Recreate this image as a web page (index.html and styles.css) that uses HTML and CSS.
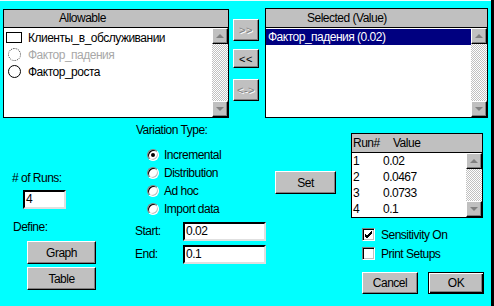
FILE: index.html
```html
<!DOCTYPE html>
<html>
  <head>
    <link rel="stylesheet" href="styles.css">
  </head>
  <body>
    <div class="dialog">
      <div class="top">
        <div class="listbox allowable">
          <div class="lb-head">Allowable</div>
          <div class="lb-body">
            <div class="lb-items">
              <div class="item"><span class="ico rect"></span>Клиенты_в_обслуживании</div>
              <div class="item disabled"><span class="ico dotted"></span>Фактор_падения</div>
              <div class="item"><span class="ico circle"></span>Фактор_роста</div>
            </div>
            <div class="scrollbar">
              <div class="sb-btn up"></div>
              <div class="sb-track"></div>
              <div class="sb-btn down"></div>
            </div>
          </div>
        </div>
        <div class="arrows">
          <button class="btn arrow off">&gt;&gt;</button>
          <button class="btn arrow">&lt;&lt;</button>
          <button class="btn arrow off">&lt;-&gt;</button>
        </div>
        <div class="listbox selected">
          <div class="lb-head">Selected (Value)</div>
          <div class="lb-body">
            <div class="lb-items">
              <div class="item sel">Фактор_падения (0.02)</div>
            </div>
            <div class="scrollbar">
              <div class="sb-btn up"></div>
              <div class="sb-track"></div>
              <div class="sb-btn down"></div>
            </div>
          </div>
        </div>
      </div>

      <div class="bottom">
        <div class="col runs">
          <div class="label runs-label"># of Runs:</div>
          <div class="field runs-field">4</div>
          <div class="label define-label">Define:</div>
          <button class="btn wide graph">Graph</button>
          <button class="btn wide table-btn">Table</button>
        </div>

        <div class="col variation">
          <div class="label vt-label">Variation Type:</div>
          <div class="radios">
            <div class="radio-row"><span class="radio on"></span>Incremental</div>
            <div class="radio-row"><span class="radio"></span>Distribution</div>
            <div class="radio-row"><span class="radio"></span>Ad hoc</div>
            <div class="radio-row"><span class="radio"></span>Import data</div>
          </div>
          <div class="range-row start">
            <span class="label">Start:</span>
            <div class="field range-field">0.02</div>
          </div>
          <div class="range-row end">
            <span class="label">End:</span>
            <div class="field range-field">0.1</div>
          </div>
        </div>

        <div class="col setcol">
          <button class="btn set">Set</button>
        </div>

        <div class="col results">
          <div class="listbox runtable">
            <div class="lb-head"><span class="c1">Run#</span><span>Value</span></div>
            <div class="lb-body">
              <div class="lb-items">
                <div class="row"><span class="c1">1</span>0.02</div>
                <div class="row"><span class="c1">2</span>0.0467</div>
                <div class="row"><span class="c1">3</span>0.0733</div>
                <div class="row"><span class="c1">4</span>0.1</div>
              </div>
              <div class="scrollbar">
                <div class="sb-btn up"></div>
                <div class="sb-track"></div>
                <div class="sb-btn down"></div>
              </div>
            </div>
          </div>
          <div class="check-row first">
            <span class="check">
              <svg width="9" height="9" viewBox="0 0 9 9"><path d="M1 4 L3 6 L8 1 M1 5 L3 7 L8 2 M1 6 L3 8 L8 3" stroke="#000" stroke-width="1" fill="none"/></svg>
            </span>Sensitivity On
          </div>
          <div class="check-row"><span class="check"></span>Print Setups</div>
          <div class="actions">
            <button class="btn act">Cancel</button>
            <button class="btn act default">OK</button>
          </div>
        </div>
      </div>
    </div>
  </body>
</html>
```

FILE: styles.css
```css
body {
  margin: 0;
  background: #000;
  font-family: "Liberation Sans", Arial, sans-serif;
  font-size: 12px;
  letter-spacing: -0.5px;
  color: #000;
}
.dialog {
  box-sizing: border-box;
  width: 491px;
  height: 306px;
  background: #00ffff;
  border-top: 1px solid #e8ffff;
  overflow: hidden;
}

/* top row: two list boxes and the move buttons */
.top {
  display: flex;
  align-items: flex-start;
  padding: 7px 0 0 3px;
  height: 110px;
}
.listbox {
  box-sizing: border-box;
  border: 1px solid #000;
  background: #fff;
  display: flex;
  flex-direction: column;
}
.lb-head {
  background: #c0c0c0;
  border-bottom: 1px solid #000;
  height: 17px;
  line-height: 17px;
  white-space: nowrap;
}
.lb-body {
  flex: 1;
  display: flex;
  min-height: 0;
}
.lb-items {
  flex: 1;
  padding-top: 1px;
}
.allowable {
  margin-top: 1px;
  width: 226px;
  height: 109px;
}
.allowable .lb-head {
  padding-left: 55px;
}
.selected {
  margin-left: 6px;
  width: 223px;
  height: 110px;
}
.selected .lb-head {
  height: 18px;
  line-height: 18px;
  padding-left: 41px;
}
.item {
  display: flex;
  align-items: center;
  height: 17px;
  white-space: nowrap;
}
.allowable .item {
  padding-left: 2px;
}
.item.disabled {
  color: #a8a8a8;
}
.item.sel {
  background: #000080;
  color: #fff;
  height: 16px;
  padding-left: 2px;
}
.ico {
  box-sizing: border-box;
  display: inline-block;
  margin-right: 6px;
}
.ico.rect {
  width: 16px;
  height: 11px;
  border: 1px solid #000;
}
.ico.circle,
.ico.dotted {
  width: 13px;
  height: 13px;
  margin-left: 2px;
  margin-right: 7px;
  border-radius: 50%;
  border: 1px solid #000;
}
.ico.dotted {
  border: 1px dotted #333;
}

/* scrollbars */
.scrollbar {
  width: 16px;
  display: flex;
  flex-direction: column;
}
.sb-btn {
  box-sizing: border-box;
  height: 16px;
  background: #c0c0c0;
  border: 1px solid;
  border-color: #fff #000 #000 #fff;
  box-shadow: inset -1px -1px #808080;
  position: relative;
}
.sb-btn::after {
  content: "";
  position: absolute;
  left: 3px;
  top: 5px;
  border-left: 4px solid transparent;
  border-right: 4px solid transparent;
  border-bottom: 4px solid #808080;
}
.sb-btn.down::after {
  border-bottom: 0;
  border-top: 4px solid #808080;
}
.sb-track {
  flex: 1;
  background: repeating-conic-gradient(#c0c0c0 0 25%, #fff 0 50%) 0 0 / 2px 2px;
}

/* move buttons */
.arrows {
  display: flex;
  flex-direction: column;
  margin-left: 4px;
  width: 26px;
}
.btn {
  box-sizing: border-box;
  background: #c0c0c0;
  border: 1px solid;
  border-color: #fff #000 #000 #fff;
  box-shadow: inset -1px -1px #808080;
  font: inherit;
  letter-spacing: inherit;
  color: #000;
  padding: 0;
}
.arrow {
  height: 22px;
  font-size: 11px;
  letter-spacing: 0.5px;
}
.arrow:nth-child(1) {
  margin-top: 11px;
}
.arrow:nth-child(2) {
  margin-top: 8px;
  height: 19px;
}
.arrow:nth-child(3) {
  margin-top: 11px;
}
.arrow.off {
  color: #808080;
  text-shadow: 1px 1px #fff;
}

/* lower half */
.bottom {
  display: flex;
  align-items: flex-start;
}
.col {
  display: flex;
  flex-direction: column;
  align-items: flex-start;
}
.label {
  line-height: 15px;
  white-space: nowrap;
}
.field {
  box-sizing: border-box;
  height: 19px;
  background: #fff;
  border: 2px solid;
  border-color: #000 #e0e0e0 #e0e0e0 #000;
  line-height: 15px;
  padding-left: 1px;
}
.runs {
  width: 123px;
  padding-left: 12px;
}
.runs-label {
  margin-top: 53px;
}
.runs-field {
  margin-top: 4px;
  margin-left: 11px;
  width: 43px;
}
.define-label {
  margin-top: 11px;
  margin-left: 1px;
}
.wide {
  width: 69px;
  height: 23px;
  margin-left: 15px;
}
.graph {
  margin-top: 6px;
}
.table-btn {
  margin-top: 3px;
}

.variation {
  width: 140px;
}
.vt-label {
  margin-top: 5px;
  margin-left: 1px;
}
.radios {
  margin-top: 8px;
  margin-left: 12px;
}
.radio-row {
  display: flex;
  align-items: center;
  height: 18px;
  white-space: nowrap;
}
.radio {
  box-sizing: border-box;
  width: 12px;
  height: 12px;
  border-radius: 50%;
  background: #fff;
  border: 1px solid;
  border-color: #808080 #fff #fff #808080;
  box-shadow: inset 1px 1px #000, inset -1px -1px #c0c0c0;
  margin-right: 5px;
  position: relative;
}
.radio.on::after {
  content: "";
  position: absolute;
  left: 3px;
  top: 3px;
  width: 4px;
  height: 4px;
  border-radius: 50%;
  background: #000;
}
.range-row {
  display: flex;
  align-items: center;
}
.range-row .label {
  width: 48px;
}
.range-row.start {
  margin-top: 4px;
}
.range-row.end {
  margin-top: 4px;
}
.range-field {
  width: 83px;
}

.setcol {
  width: 76px;
}
.set {
  margin-top: 53px;
  width: 61px;
  height: 23px;
}

.runtable {
  margin-top: 15px;
  width: 132px;
  height: 85px;
}
.runtable .lb-head {
  height: 18px;
  line-height: 18px;
  padding-left: 1px;
}
.runtable .lb-items {
  padding-top: 0;
}
.row {
  height: 16px;
  line-height: 16px;
  padding-left: 1px;
}
.c1 {
  display: inline-block;
  width: 30px;
}
.runtable .lb-head .c1 {
  width: 40px;
}
.check-row {
  display: flex;
  align-items: center;
  height: 13px;
  margin-left: 11px;
  margin-top: 6px;
  white-space: nowrap;
}
.check-row.first {
  margin-top: 10px;
}
.check {
  box-sizing: border-box;
  width: 13px;
  height: 13px;
  background: #fff;
  border: 1px solid;
  border-color: #808080 #fff #fff #808080;
  box-shadow: inset 1px 1px #000, inset -1px -1px #c0c0c0;
  margin-right: 6px;
  display: flex;
  align-items: center;
  justify-content: center;
}
.actions {
  display: flex;
  gap: 10px;
  margin-top: 12px;
  margin-left: 11px;
}
.act {
  width: 56px;
  height: 22px;
}
.act.default {
  border: 1px solid #000;
  box-shadow: inset 1px 1px #fff, inset -1px -1px #000, inset -2px -2px #808080;
}
```
